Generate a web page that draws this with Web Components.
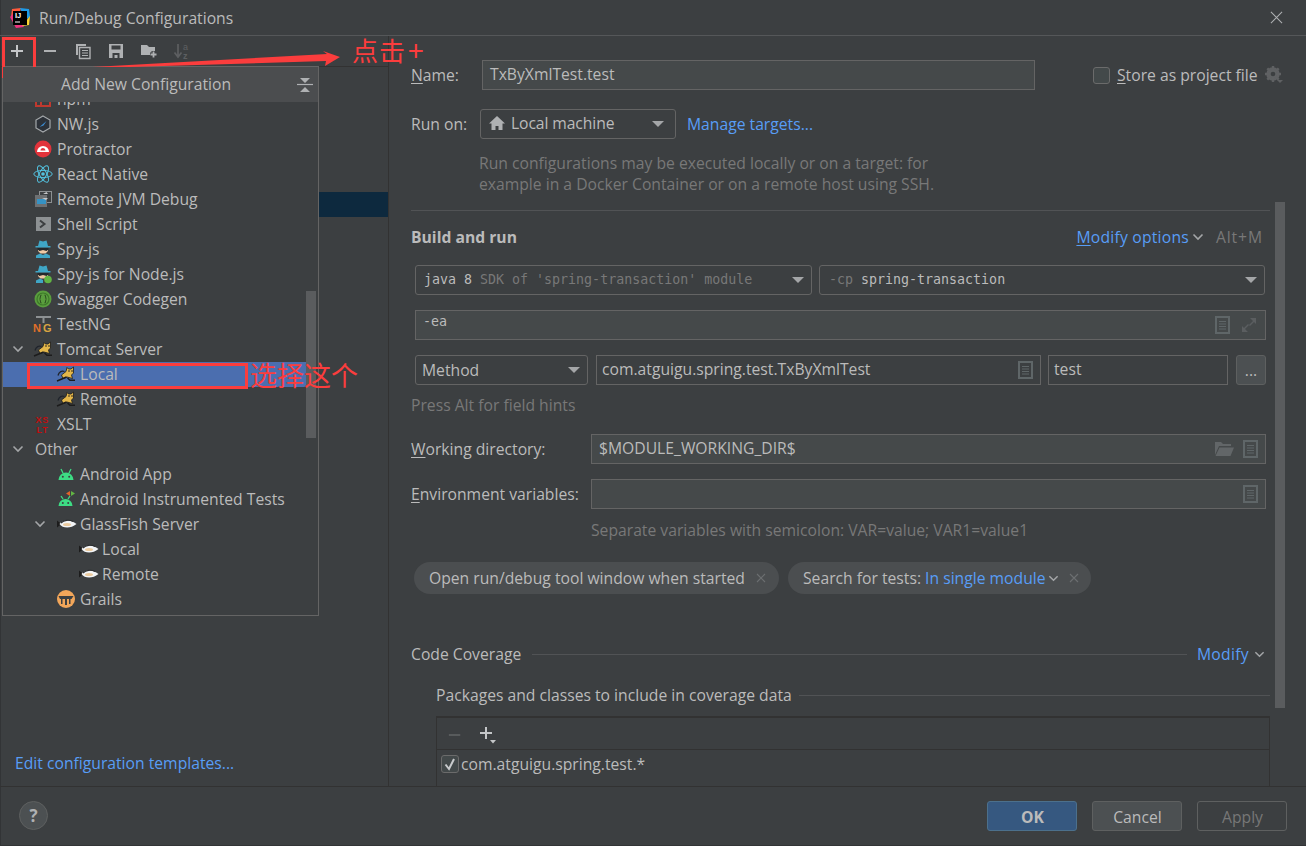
<!DOCTYPE html>
<html lang="en">
<head>
<meta charset="utf-8">
<title>Run/Debug Configurations</title>
<style>
  html, body { margin: 0; padding: 0; background: #3c3f41; }
  body { font: 15.7px "Open Sans", "Noto Sans CJK SC", sans-serif; color: #bbbbbb; }
</style>
</head>
<body>
<run-dialog>
  <title-bar slot="title">Run/Debug Configurations</title-bar>
  <config-sidebar slot="sidebar"></config-sidebar>
  <form-panel slot="form"></form-panel>
  <dialog-footer slot="footer"></dialog-footer>
  <add-popup slot="over"></add-popup>
  <red-notes slot="over"></red-notes>
</run-dialog>

<script>
const ICONS = {
  logo: `<svg viewBox="0 0 20 20"><path d="M2 1 11 0 8 10 1 9z" fill="#ff5a3c"/><path d="M10 0 19 1 20 9 15 12z" fill="#1e9be8"/><path d="M0 9 6 20 14 19 4 5z" fill="#f0337e"/><path d="M12 18 20 8 19 17z" fill="#fbd12e"/><rect x="3" y="3" width="14" height="14" fill="#000"/><text x="5" y="10" font-size="7.5" font-weight="700" font-family="Liberation Sans" fill="#fff">IJ</text><rect x="5" y="13.5" width="5" height="1" fill="#fff"/></svg>`,
  close: `<svg viewBox="0 0 14 14"><path d="M1 1 13 13M13 1 1 13" stroke="#afb1b3" stroke-width="1.1" fill="none"/></svg>`,
  plus: `<svg viewBox="0 0 16 16"><path d="M8 2v12M2 8h12" stroke="#c4c6c8" stroke-width="2" fill="none"/></svg>`,
  minus: `<svg viewBox="0 0 16 16"><path d="M2 8h12" stroke="#afb1b3" stroke-width="2" fill="none"/></svg>`,
  copy: `<svg viewBox="0 0 16 16"><path d="M1 1h10v2H3v9H1z" fill="#afb1b3"/><path d="M4.500 4.500h10.500v11H4.500z" fill="none" stroke="#afb1b3" stroke-width="1.400"/><path d="M7 7.500h6M7 10h6M7 12.500h6" stroke="#afb1b3" stroke-width="1.200"/></svg>`,
  save: `<svg viewBox="0 0 16 16"><path d="M1 1h14v14H1z" fill="#afb1b3"/><rect x="3.500" y="2.500" width="9" height="4" fill="#3c3f41"/><rect x="4.500" y="10" width="7" height="5" fill="#3c3f41"/><rect x="6.500" y="12" width="3" height="3" fill="#afb1b3"/></svg>`,
  folderplus: `<svg viewBox="0 0 18 16"><path d="M1 2h6l2 2h6v8H1z" fill="#afb1b3"/><path d="M13.500 8v7M10 11.500h7" stroke="#3c3f41" stroke-width="4"/><path d="M13.500 8.500v6M10.500 11.500h6" stroke="#afb1b3" stroke-width="1.800"/></svg>`,
  sort: `<svg viewBox="0 0 18 18"><path d="M5 2v12M1.500 10.500 5 15l3.500-4.500" fill="none" stroke="#5d5f61" stroke-width="1.700"/><text x="10" y="8" font-size="9" font-family="Liberation Sans" fill="#5d5f61">a</text><text x="10" y="17" font-size="9" font-weight="700" font-family="Liberation Sans" fill="#5d5f61">z</text></svg>`,
  collapse: `<svg viewBox="0 0 16 16"><path d="M0 7.500h16" stroke="#afb1b3" stroke-width="1.200"/><path d="M3 1h10L8 6zM3 15h10L8 10z" fill="#afb1b3"/></svg>`,
  chevron: `<svg viewBox="0 0 12 12"><path d="M1.500 3.500 6 8l4.500-4.500" fill="none" stroke="#a4a6a8" stroke-width="1.600"/></svg>`,
  caret: `<svg viewBox="0 0 12 8"><path d="M0 1h12L6 7z" fill="#a4a6a8"/></svg>`,
  house: `<svg viewBox="0 0 16 16"><path d="M8 1 0 8.500h2.500V15h4v-4h3v4h4V8.500H16z" fill="#afb1b3"/></svg>`,
  gear: `<svg viewBox="0 0 18 18"><circle cx="8" cy="8" r="5" fill="none" stroke="#5f6163" stroke-width="3.400"/><path d="M8 0v16M0 8h16M2.300 2.300 13.700 13.700M13.700 2.300 2.300 13.700" stroke="#5f6163" stroke-width="2.400"/><circle cx="8" cy="8" r="2.300" fill="#3c3f41"/><path d="M12 14h6l-3 3z" fill="#5f6163"/></svg>`,
  doc: `<svg viewBox="0 0 15 18"><rect x="1" y="1" width="13" height="16" fill="none" stroke="#5f6668" stroke-width="2"/><path d="M4 5.500h7M4 8h7M4 10.500h7M4 13h7" stroke="#5f6668" stroke-width="1.200"/></svg>`,
  expand: `<svg viewBox="0 0 16 16"><path d="M9 1h6v6l-2-2-4 4-1-1 4-4zM7 15H1V9l2 2 4-4 1 1-4 4z" fill="#5b5e60"/></svg>`,
  folder: `<svg viewBox="0 0 20 16"><path d="M1 1h6l2 2h8v2H5L1 14z" fill="#626668"/><path d="M5.500 6.500H20L16.500 15H1.500z" fill="#626668"/></svg>`,
  tagx: `<svg viewBox="0 0 10 10"><path d="M1 1 9 9M9 1 1 9" stroke="#6c6f71" stroke-width="1.100" fill="none"/></svg>`,
  npm: `<svg viewBox="0 0 18 18"><rect x="2" y="2" width="14" height="14" fill="none" stroke="#c0392f" stroke-width="2"/><rect x="6" y="6" width="2" height="10" fill="#c0392f"/></svg>`,
  nwjs: `<svg viewBox="0 0 18 18"><path d="M9 1 16 5v8l-7 4-7-4V5z" fill="#2c3138" stroke="#a4a8ab" stroke-width="1.200"/><path d="M5.500 12 12.500 6 9.500 10.500z" fill="#3d8fd8"/></svg>`,
  protractor: `<svg viewBox="0 0 18 18"><circle cx="9" cy="9" r="8.500" fill="#e2333b"/><path d="M3 12a6 6 0 0 1 12 0z" fill="#fff"/><path d="M6.500 10.500a2.500 2.500 0 0 1 5 0z" fill="#e2333b"/></svg>`,
  react: `<svg viewBox="0 0 20 20" fill="none" stroke="#53c1de" stroke-width="1"><ellipse cx="10" cy="10" rx="9.200" ry="3.600"/><ellipse cx="10" cy="10" rx="9.200" ry="3.600" transform="rotate(60 10 10)"/><ellipse cx="10" cy="10" rx="9.200" ry="3.600" transform="rotate(120 10 10)"/><circle cx="10" cy="10" r="1.800" fill="#53c1de" stroke="none"/></svg>`,
  jvm: `<svg viewBox="0 0 18 18"><rect x="5.500" y="1.500" width="12" height="11" fill="none" stroke="#8c9092" stroke-width="1"/><rect x="1" y="5" width="12" height="12" fill="#6d7072"/><rect x="3" y="9" width="9" height="5" fill="#3592c4"/><path d="M9 4h5l-1.500-2zM8 8h6l-2 2z" fill="#c4c6c8"/></svg>`,
  shell: `<svg viewBox="0 0 18 18"><rect x="2" y="2" width="15" height="14" fill="#8d9193"/><path d="M6 5.500 10.500 9 6 12.500" fill="none" stroke="#3c3f41" stroke-width="2"/></svg>`,
  spy: `<svg viewBox="0 0 18 18"><path d="M5.500 .5 9 1.500 12.500 .5 14 6h2.500v1.500h-15V6H4z" fill="#3fa6c6"/><path d="M4 8h10v3l-2.500 2.500h-5L4 11z" fill="#efc9a4"/><path d="M3.500 8h11v1.500l-2 1.500-3.500-1-3.500 1-2-1.500z" fill="#25282a"/><path d="M2 18v-2.500L6 13.500 9 15l3-1.500 4 2V18z" fill="#3fa6c6"/></svg>`,
  spynode: `<svg viewBox="0 0 18 18"><path d="M5.500 .5 9 1.500 12.500 .5 14 6h2.500v1.500h-15V6H4z" fill="#3fa6c6"/><path d="M4 8h10v3l-2.500 2.500h-5L4 11z" fill="#efc9a4"/><path d="M3.500 8h11v1.500l-2 1.500-3.500-1-3.500 1-2-1.500z" fill="#25282a"/><path d="M2 18v-2.500L6 13.500 9 15v3z" fill="#3fa6c6"/><circle cx="14" cy="14.500" r="3.800" fill="#62b543"/></svg>`,
  swagger: `<svg viewBox="0 0 18 18"><circle cx="9" cy="9" r="8.500" fill="#5a9e3e"/><circle cx="9" cy="9" r="6" fill="none" stroke="#3d7a29" stroke-width="1.200"/><path d="M7.500 5C5.500 5 7 9 5.500 9 7 9 5.500 13 7.500 13M10.500 5c2 0 .5 4 2 4-1.500 0 0 4-2 4" fill="none" stroke="#2d4f21" stroke-width="1.100"/></svg>`,
  testng: `<svg viewBox="0 0 18 18"><path d="M2 1h15v2H10.500v5h-2V3H2z" fill="#8d9193"/><text x="-1" y="16.500" font-size="11" font-weight="700" font-family="Liberation Sans" fill="#e0702a">N</text><text x="9" y="16.500" font-size="11" font-weight="700" font-family="Liberation Sans" fill="#d9a441">G</text></svg>`,
  tomcat: `<svg viewBox="0 0 18 18"><path d="M1 10.500C2 6.500 5 5.500 7.500 6.500" fill="none" stroke="#20242c" stroke-width="1.300"/><path d="M10 2.500 11.500 4H14L16.500 2 16.500 8 14.500 10 15.500 13.500 10 12 6 13.500 4.500 10 9 6.500z" fill="#e4b74a" stroke="#1c1c1c" stroke-width=".8"/><path d="M0 16 6 13.500 9.500 12M10.500 13 13 15.200H18" fill="none" stroke="#1c1c1c" stroke-width="1.500"/><circle cx="12" cy="6" r=".8" fill="#1c1c1c"/><circle cx="15" cy="6" r=".8" fill="#1c1c1c"/></svg>`,
  xslt: `<svg viewBox="0 0 18 18"><text x="1.500" y="8" font-size="9" font-weight="700" letter-spacing=".8" font-family="Liberation Sans" fill="#c00d0d">XS</text><text x="2.500" y="17.500" font-size="9" font-weight="700" letter-spacing=".8" font-family="Liberation Sans" fill="#c00d0d">LT</text></svg>`,
  android: `<svg viewBox="0 0 18 18"><path d="M1.500 15a7.500 7.500 0 0 1 15 0z" fill="#3ddc84"/><path d="M4 4 6 8M14 4l-2 4" stroke="#3ddc84" stroke-width="1.300"/><circle cx="5.800" cy="11.700" r="1" fill="#3c3f41"/><circle cx="12.200" cy="11.700" r="1" fill="#3c3f41"/></svg>`,
  androidtest: `<svg viewBox="0 0 18 18"><path d="M1.500 16a7 7 0 0 1 14 0z" fill="#3ddc84"/><path d="M4 6 6 9M13 6l-2 3" stroke="#3ddc84" stroke-width="1.300"/><circle cx="5.800" cy="13" r="1" fill="#3c3f41"/><circle cx="11.200" cy="13" r="1" fill="#3c3f41"/><path d="M13 1v5l-4-2.500z" fill="#e0622a"/><path d="M14 1l4 2.500L14 6z" fill="#62b543"/></svg>`,
  fish: `<svg viewBox="0 0 20 12"><path d="M0 2.500 4.500 6 0 9.500z" fill="#1c1c1c"/><path d="M2.500 6c3-4.500 11-5 17 0-6 5-14 4.500-17 0z" fill="#f2f4f6"/><path d="M4 5c3-3 8-3.500 12-1.500" fill="none" stroke="#2b2d2f" stroke-width="1.100"/><ellipse cx="10" cy="6.500" rx="4" ry="1.600" fill="#eccb9f"/></svg>`,
  grails: `<svg viewBox="0 0 18 18"><circle cx="9" cy="9" r="9" fill="#f2a65a"/><path d="M1.500 6h15l-2 3h-1v5h-1.500V9H10v6H8V9H5.500v5H4V9H3z" fill="#3c3f41"/></svg>`,
  check: `<svg viewBox="0 0 18 18"><rect x=".500" y=".500" width="17" height="17" rx="2.500" fill="#43494a" stroke="#6b6b6b"/><path d="M4.500 9.500 8 14l5-10" fill="none" stroke="#c9cbcd" stroke-width="2"/></svg>`,
  plusdown: `<svg viewBox="0 0 18 18"><path d="M7 1v12M1 7h12" stroke="#c4c6c8" stroke-width="2"/><path d="M11 14h6l-3 3.500z" fill="#c4c6c8"/></svg>`,
  graydash: `<svg viewBox="0 0 16 16"><path d="M1 8h13" stroke="#5d5f61" stroke-width="2"/></svg>`
};

class IdeIcon extends HTMLElement {
  connectedCallback() {
    const w = this.getAttribute('w') || 16;
    const h = this.getAttribute('h') || w;
    this.attachShadow({ mode: 'open' });
    this.shadowRoot.innerHTML = `
      <style>
        :host { display: inline-flex; flex: none; width: ${w}px; height: ${h}px; }
        svg { width: 100%; height: 100%; display: block; overflow: visible; }
      </style>
      ${ICONS[this.getAttribute('name')] || ''}
    `;
  }
}

class RunDialog extends HTMLElement {
  constructor() {
    super();
    this.attachShadow({ mode: 'open' });
    this.shadowRoot.innerHTML = `
      <style>
        :host { display: block; position: relative; width: 1306px; height: 846px; overflow: hidden; background: #3c3f41; box-shadow: inset 1px 0 #323436, inset 0 -1px #323436; }
        .main { display: flex; height: 750px; }
        ::slotted([slot=sidebar]) { width: 389px; flex: none; }
        ::slotted([slot=form]) { flex: 1; min-width: 0; }
      </style>
      <slot name="title"></slot>
      <div class="main"><slot name="sidebar"></slot><slot name="form"></slot></div>
      <slot name="footer"></slot>
      <slot name="over"></slot>
    `;
  }
}

class TitleBar extends HTMLElement {
  constructor() {
    super();
    this.attachShadow({ mode: 'open' });
    this.shadowRoot.innerHTML = `
      <style>
        :host { display: flex; align-items: center; height: 35px; border-bottom: 1px solid #555759; padding: 0 23px 0 10px; box-sizing: content-box; }
        .text { margin-left: 9px; flex: 1; }
      </style>
      <ide-icon name="logo" w="20"></ide-icon>
      <span class="text"><slot></slot></span>
      <ide-icon name="close" w="13"></ide-icon>
    `;
  }
}

class ConfigSidebar extends HTMLElement {
  constructor() {
    super();
    this.attachShadow({ mode: 'open' });
    this.shadowRoot.innerHTML = `
      <style>
        :host { display: flex; flex-direction: column; height: 750px; box-sizing: border-box; border-right: 1px solid #323232; }
        .tools { display: flex; height: 30px; border-bottom: 1px solid #323232; flex: none; box-sizing: content-box; }
        .tools span { width: 33px; display: flex; align-items: center; justify-content: center; }
        .list { flex: 1; padding-top: 125px; }
        .picked { height: 25px; margin-left: 2px; background: #0d293e; }
        a { color: #589df6; padding: 0 0 12px 15px; text-decoration: none; }
      </style>
      <div class="tools">
        <span><ide-icon name="plus"></ide-icon></span>
        <span><ide-icon name="minus"></ide-icon></span>
        <span><ide-icon name="copy"></ide-icon></span>
        <span><ide-icon name="save"></ide-icon></span>
        <span><ide-icon name="folderplus" w="18" h="16"></ide-icon></span>
        <span><ide-icon name="sort" w="18"></ide-icon></span>
      </div>
      <div class="list"><div class="picked"></div></div>
      <a>Edit configuration templates...</a>
    `;
  }
}

class TreeRow extends HTMLElement {
  constructor() {
    super();
    this.attachShadow({ mode: 'open' });
  }
  connectedCallback() {
    const level = +(this.getAttribute('level') || 0);
    const icon = this.getAttribute('icon');
    const arrow = this.hasAttribute('open');
    const size = icon === 'fish' ? 'w="20" h="12"' : icon === 'react' ? 'w="20"' : 'w="18"';
    this.shadowRoot.innerHTML = `
      <style>
        :host { display: flex; align-items: center; height: 25px; box-sizing: border-box; padding: 0 0 1px ${level ? 10 + level * 22 : 9}px; white-space: nowrap; }
        :host([picked]) { background: #4b6eaf; }
        .arrow { width: 22px; flex: none; display: flex; }
        .arrow ide-icon { margin: 0 0 0 ${level ? -1 : 0}px; }
        .name { margin-left: ${icon ? 0 : 1}px; }
        ide-icon { margin-right: 5px; }
        ide-icon.fish { margin: 0 3px 0 0; }
        ide-icon.react { margin: 0 4px 0 -1px; }
      </style>
      <span class="arrow">${arrow ? '<ide-icon name="chevron" w="12"></ide-icon>' : ''}</span>
      ${icon ? `<ide-icon class="${icon}" name="${icon}" ${size}></ide-icon>` : ''}
      <span class="name"><slot></slot></span>
    `;
  }
}

class AddPopup extends HTMLElement {
  constructor() {
    super();
    this.attachShadow({ mode: 'open' });
    this.shadowRoot.innerHTML = `
      <style>
        :host { display: flex; flex-direction: column; position: absolute; left: 2px; top: 66px; width: 317px; height: 550px; box-sizing: border-box; background: #3c3f41; border: 1px solid #646464; }
        .head { display: flex; align-items: center; height: 35px; flex: none; background: #4b4d4f; padding: 0 5px 0 58px; position: relative; z-index: 1; }
        .head span { flex: 1; padding-bottom: 1px; }
        .body { flex: 1; overflow: hidden; padding-right: 12px; position: relative; }
        .rows { margin-top: -15px; }
        .thumb { position: absolute; right: 2px; top: 189px; width: 10px; height: 147px; background: #5a5c5e; }
      </style>
      <div class="head"><span>Add New Configuration</span><ide-icon name="collapse"></ide-icon></div>
      <div class="body">
        <div class="rows">
          <tree-row icon="npm">npm</tree-row>
          <tree-row icon="nwjs">NW.js</tree-row>
          <tree-row icon="protractor">Protractor</tree-row>
          <tree-row icon="react">React Native</tree-row>
          <tree-row icon="jvm">Remote JVM Debug</tree-row>
          <tree-row icon="shell">Shell Script</tree-row>
          <tree-row icon="spy">Spy-js</tree-row>
          <tree-row icon="spynode">Spy-js for Node.js</tree-row>
          <tree-row icon="swagger">Swagger Codegen</tree-row>
          <tree-row icon="testng">TestNG</tree-row>
          <tree-row icon="tomcat" open>Tomcat Server</tree-row>
          <tree-row icon="tomcat" level="1" picked>Local</tree-row>
          <tree-row icon="tomcat" level="1">Remote</tree-row>
          <tree-row icon="xslt">XSLT</tree-row>
          <tree-row open>Other</tree-row>
          <tree-row icon="android" level="1">Android App</tree-row>
          <tree-row icon="androidtest" level="1">Android Instrumented Tests</tree-row>
          <tree-row icon="fish" level="1" open id="gf">GlassFish Server</tree-row>
          <tree-row icon="fish" level="2">Local</tree-row>
          <tree-row icon="fish" level="2">Remote</tree-row>
          <tree-row icon="grails" level="1">Grails</tree-row>
        </div>
        <div class="thumb"></div>
      </div>
    `;
  }
}

class IdeField extends HTMLElement {
  constructor() {
    super();
    this.attachShadow({ mode: 'open' });
    this.shadowRoot.innerHTML = `
      <style>
        :host { display: flex; align-items: center; height: 30px; box-sizing: border-box; border: 1px solid #646464; background: #45494a; padding: 0 7px; white-space: nowrap; flex: none; gap: 9px; color: #bbbbbb; }
        :host([plain]) { background: #3c3f41; }
        :host([combo]) { background: #3c3f41; border-radius: 3px; }
        :host([mono]) { font: 13.3px "DejaVu Sans Mono", monospace; }
        .text { flex: 1; min-width: 0; padding-bottom: 2px; }
      </style>
      <span class="text"><slot></slot></span>
      <slot name="end"></slot>
    `;
  }
}

class IdeTag extends HTMLElement {
  constructor() {
    super();
    this.attachShadow({ mode: 'open' });
    this.shadowRoot.innerHTML = `
      <style>
        :host { display: flex; align-items: center; height: 32px; border-radius: 16px; background: #4b4e50; padding: 0 13px 0 15px; flex: none; gap: 10px; white-space: nowrap; }
      </style>
      <span><slot></slot></span>
      <ide-icon name="tagx" w="10"></ide-icon>
    `;
  }
}

class FormPanel extends HTMLElement {
  constructor() {
    super();
    this.attachShadow({ mode: 'open' });
    this.shadowRoot.innerHTML = `
      <style>
        :host { display: block; position: relative; height: 750px; overflow: hidden; padding-left: 22px; }
        .row { display: flex; align-items: center; }
        .in { padding-left: 4px; width: 851px; }
        u { text-underline-offset: 2px; }
        .hint { color: #787878; }
        .link { color: #589df6; }
        .check { width: 17px; height: 17px; box-sizing: border-box; border: 1px solid #6b6b6b; border-radius: 3px; background: #43494a; flex: none; margin: 0 7px 0 58px; }
        .rule { height: 1px; background: #515355; width: 859px; }
        .grow { flex: 1; height: 1px; background: #515355; }
        .dots { width: 30px; height: 30px; box-sizing: border-box; border: 1px solid #5e6060; border-radius: 3px; background: #4c5052; display: flex; align-items: center; justify-content: center; flex: none; margin-left: 8px; }
        .table { margin: 11px 0 0 25px; width: 834px; height: 90px; box-sizing: border-box; border-top: 2px solid #323232; border-left: 1px solid #323232; border-right: 1px solid #323232; }
        .table .bar { display: flex; align-items: center; gap: 17px; height: 31px; box-sizing: content-box; padding-left: 11px; border-bottom: 1px solid #323232; }
        .table .bar ide-icon { margin-top: 3px; }
        .table .item { display: flex; align-items: center; gap: 2px; height: 27px; padding-left: 4px; }
        .scroll { position: absolute; left: 886px; top: 166px; width: 10px; height: 506px; background: #5a5c5e; }
        b { color: #bbbbbb; font-weight: 700; }
        .dim { color: #787878; }
      </style>
      <div class="row" style="margin-top:24px">
        <span style="width:71px"><u>N</u>ame:</span>
        <ide-field style="width:553px">TxByXmlTest.test</ide-field>
        <span class="check"></span>
        <span><u>S</u>tore as project file</span>
        <ide-icon name="gear" w="18" style="margin-left:7px"></ide-icon>
      </div>
      <div class="row" style="margin-top:19px">
        <span style="width:69px">Run on:</span>
        <ide-field combo style="width:196px;padding-left:8px">
          <span style="display:flex;align-items:center;gap:6px;letter-spacing:-.1px"><ide-icon name="house"></ide-icon>Local machine</span>
          <ide-icon slot="end" name="caret" w="12" h="8" style="margin-right:4px"></ide-icon>
        </ide-field>
        <span class="link" style="margin-left:11px">Manage targets...</span>
      </div>
      <div class="hint" style="margin:14px 0 0 68px;line-height:21px">Run configurations may be executed locally or on a target: for<br>example in a Docker Container or on a remote host using SSH.</div>
      <div class="rule" style="margin-top:15px"></div>
      <div class="row" style="margin-top:15px;height:22px;width:852px">
        <b style="flex:1">Build and run</b>
        <span class="link" style="letter-spacing:.22px"><u>M</u>odify options</span>
        <ide-icon name="chevron" w="12" style="margin:0 12px 0 3px"></ide-icon>
        <span class="dim" style="letter-spacing:.9px">Alt+M</span>
      </div>
      <div class="row in" style="margin-top:17px;gap:7px">
        <ide-field combo mono style="width:397px;padding-left:8px"><span>java 8 <span class="dim">SDK of 'spring-transaction' module</span></span><ide-icon slot="end" name="caret" w="12" h="8"></ide-icon></ide-field>
        <ide-field combo mono style="width:446px;padding-left:9px"><span><span class="dim">-cp</span> spring-transaction</span><ide-icon slot="end" name="caret" w="12" h="8"></ide-icon></ide-field>
      </div>
      <div class="row in" style="margin-top:15px">
        <ide-field mono style="width:851px;align-items:flex-start;padding-top:3px;padding-left:7px">-ea
          <ide-icon slot="end" name="doc" w="15" h="18" style="margin:2px 2px 0 0"></ide-icon>
          <ide-icon slot="end" name="expand" w="16" style="margin:3px 1px 0 0"></ide-icon>
        </ide-field>
      </div>
      <div class="row in" style="margin-top:15px">
        <ide-field combo style="width:173px;padding-left:6px"><span style="display:block;padding-top:2px">Method</span><ide-icon slot="end" name="caret" w="12" h="8"></ide-icon></ide-field>
        <ide-field plain style="width:445px;margin-left:8px;padding-left:5px">com.atguigu.spring.test.TxByXmlTest<ide-icon slot="end" name="doc" w="15" h="18"></ide-icon></ide-field>
        <ide-field plain style="width:180px;margin-left:7px;padding-left:5px">test</ide-field>
        <span class="dots">...</span>
      </div>
      <div class="hint" style="margin-top:10px;height:20px;line-height:20px">Press Alt for field hints</div>
      <div class="row" style="margin-top:19px;width:855px">
        <span style="width:180px"><u>W</u>orking directory:</span>
        <ide-field style="width:675px">$MODULE_WORKING_DIR$
          <ide-icon slot="end" name="folder" w="20" h="16"></ide-icon>
          <ide-icon slot="end" name="doc" w="15" h="18"></ide-icon>
        </ide-field>
      </div>
      <div class="row" style="margin-top:15px;width:855px">
        <span style="width:180px"><u>E</u>nvironment variables:</span>
        <ide-field style="width:675px"><ide-icon slot="end" name="doc" w="15" h="18"></ide-icon></ide-field>
      </div>
      <div class="hint" style="margin:11px 0 0 180px;height:20px;line-height:20px">Separate variables with semicolon: VAR=value; VAR1=value1</div>
      <div class="row" style="margin:22px 0 0 3px;gap:9px">
        <ide-tag style="width:365px;box-sizing:border-box;justify-content:space-between">Open run/debug tool window when started</ide-tag>
        <ide-tag style="width:303px;box-sizing:border-box;justify-content:space-between;padding-right:15px">Search for tests: <span class="link">In single module</span> <ide-icon name="chevron" w="11" style="margin-left:-2px"></ide-icon></ide-tag>
      </div>
      <div class="row" style="margin-top:50px;height:20px;width:854px">
        <span>Code Coverage</span>
        <span class="grow" style="margin:0 10px 0 11px"></span>
        <span class="link" style="letter-spacing:.3px">Modify</span>
        <ide-icon name="chevron" w="11" style="margin-left:5px"></ide-icon>
      </div>
      <div class="row" style="margin:21px 0 0 25px;height:20px;width:834px">
        <span>Packages and classes to include in coverage data</span>
        <span class="grow" style="margin-left:7px"></span>
      </div>
      <div class="table">
        <div class="bar"><ide-icon name="graydash" w="14"></ide-icon><ide-icon name="plusdown" w="18"></ide-icon></div>
        <div class="item"><ide-icon name="check" w="18"></ide-icon><span>com.atguigu.spring.test.*</span></div>
      </div>
      <div class="scroll"></div>
    `;
  }
}

class DialogFooter extends HTMLElement {
  constructor() {
    super();
    this.attachShadow({ mode: 'open' });
    this.shadowRoot.innerHTML = `
      <style>
        :host { display: flex; align-items: flex-start; height: 59px; border-top: 1px solid #323232; padding: 14px 19px 0; gap: 15px; box-sizing: content-box; position: relative; }
        .help { width: 29px; height: 29px; border-radius: 50%; background: #4c5052; border: 1px solid #5e6060; box-sizing: border-box; display: flex; align-items: center; justify-content: center; font-weight: 700; font-size: 17px; color: #afb1b3; margin-right: auto; }
        .btn { width: 90px; height: 30px; box-sizing: border-box; border-radius: 3px; border: 1px solid #5e6060; background: #4c5052; display: flex; align-items: center; justify-content: center; padding: 1px 0 0 1px; }
        .ok { background: #365880; border-color: #4c708c; font-weight: 700; }
        .off { background: #3c3f41; border-color: #5e6060; color: #777777; }
      </style>
      <span class="help">?</span>
      <span class="btn ok">OK</span>
      <span class="btn">Cancel</span>
      <span class="btn off">Apply</span>
    `;
  }
}

class RedNotes extends HTMLElement {
  constructor() {
    super();
    this.attachShadow({ mode: 'open' });
    this.shadowRoot.innerHTML = `
      <style>
        :host { display: block; position: absolute; inset: 0; pointer-events: none; color: #fb3d3d; font-family: "Noto Sans CJK SC", sans-serif; }
        svg { position: absolute; left: 0; top: 0; width: 1306px; height: 846px; }
        .click, .pick { position: absolute; line-height: 1; white-space: nowrap; }
        .click { left: 352px; top: 37px; font-size: 26px; letter-spacing: 1px; }
        .click i { font-style: normal; font-size: 28px; line-height: 0; margin-left: 2px; }
        .pick { left: 250px; top: 361px; font-size: 27px; }
      </style>
      <svg viewBox="0 0 1306 846">
        <rect x="3.500" y="38.500" width="31" height="38" fill="none" stroke="#fb3d3d" stroke-width="3"/>
        <rect x="28.500" y="364.500" width="218" height="23" fill="none" stroke="#fb3d3d" stroke-width="3"/>
        <path d="M47 69.500 327 54 323 51 340 57 325 66 326 61z" fill="#fb3d3d"/>
      </svg>
      <span class="click">点击<i>+</i></span>
      <span class="pick">选择这个</span>
    `;
  }
}

customElements.define('ide-icon', IdeIcon);
customElements.define('ide-field', IdeField);
customElements.define('ide-tag', IdeTag);
customElements.define('tree-row', TreeRow);
customElements.define('title-bar', TitleBar);
customElements.define('config-sidebar', ConfigSidebar);
customElements.define('add-popup', AddPopup);
customElements.define('form-panel', FormPanel);
customElements.define('dialog-footer', DialogFooter);
customElements.define('red-notes', RedNotes);
customElements.define('run-dialog', RunDialog);
</script>
</body>
</html>
